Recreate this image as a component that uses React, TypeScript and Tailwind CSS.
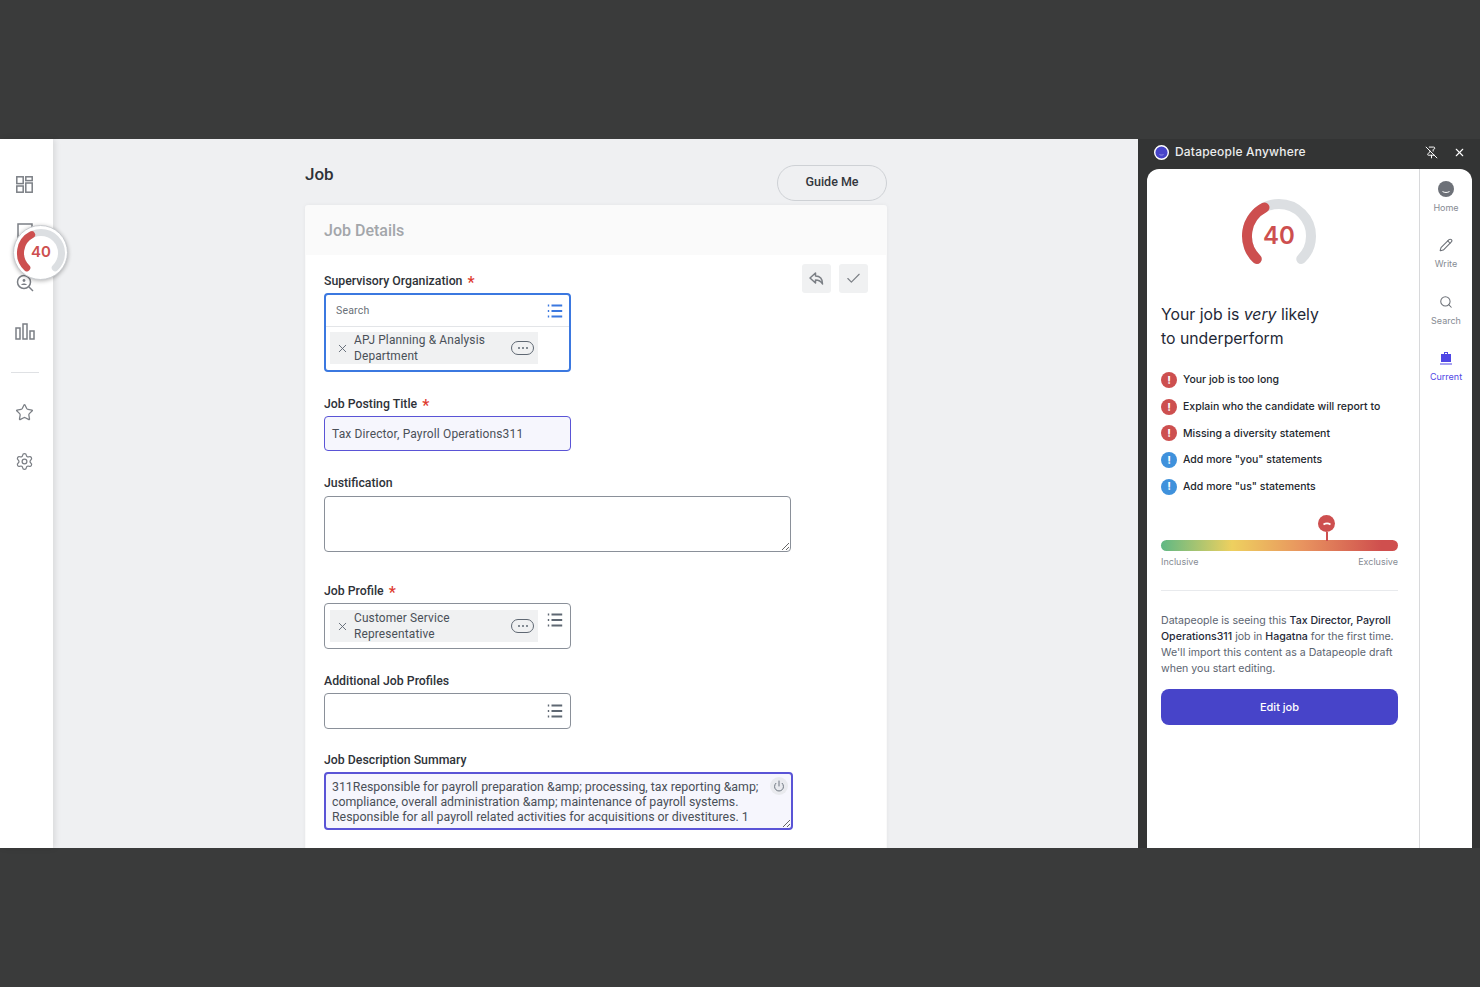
import React from "react";
import { Star, Settings, X, Check, PinOff, Pencil, Search, Power } from "lucide-react";

const roboto = "font-['Roboto',sans-serif]";

function Gauge({ size, r, sw, score, cls }: { size: number; r: number; sw: number; score: string; cls: string }) {
  const c = size / 2;
  const pt = (deg: number) => {
    const a = (deg * Math.PI) / 180;
    return `${c + r * Math.sin(a)} ${c - r * Math.cos(a)}`;
  };
  return (
    <div className="relative" style={{ width: size, height: size }}>
      <svg width={size} height={size} viewBox={`0 0 ${size} ${size}`} fill="none" strokeLinecap="round" strokeWidth={sw}>
        <path d={`M${pt(-136)} A${r} ${r} 0 1 1 ${pt(136)}`} stroke="#dcdfe2" />
        <path d={`M${pt(-136)} A${r} ${r} 0 0 1 ${pt(-27)}`} stroke="#cd4f4f" />
      </svg>
      <span className={`absolute inset-0 flex items-center justify-center font-['Inter',sans-serif] font-semibold text-[#cd4f4f] ${cls}`}>{score}</span>
    </div>
  );
}

function ListIcon({ blue }: { blue?: boolean }) {
  const col = blue ? "#3b78e0" : "#5f6873";
  return (
    <svg width="16" height="14" viewBox="0 0 16 14" fill="none" stroke={col} strokeWidth="1.8">
      <path d="M4.500 1.500H15.200M4.500 7H15.200M4.500 12.500H15.200" />
      <path d="M0.800 1.500H2.200M0.800 7H2.200M0.800 12.500H2.200" />
    </svg>
  );
}

function Chip({ l1, l2 }: { l1: string; l2: string }) {
  return (
    <div className="flex h-8 w-[208px] items-center bg-[#f0f1f2]">
      <X size={13} className="ml-[6px] shrink-0 text-[#5f6873]" strokeWidth={1.7} />
      <div className="ml-[5px] flex-1 text-[11.900px] leading-4 tracking-[0.15px] text-[#4a5058]">
        <div>{l1}</div>
        <div>{l2}</div>
      </div>
      <div className="mr-[4px] flex h-[14px] w-[23px] items-center justify-center gap-[2px] rounded-full border border-[#5f6873]">
        <i className="h-[2px] w-[2px] rounded-full bg-[#5f6873]" />
        <i className="h-[2px] w-[2px] rounded-full bg-[#5f6873]" />
        <i className="h-[2px] w-[2px] rounded-full bg-[#5f6873]" />
      </div>
    </div>
  );
}

function Label({ text, req }: { text: string; req?: boolean }) {
  return (
    <div className="flex h-4 text-[12.300px] font-medium leading-4 text-[#2e3238]">
      <span>{text}</span>
      {req && <span className="ml-[5px] mt-[2px] text-[16px] leading-4 text-[#de3b2f]">*</span>}
    </div>
  );
}

function Issue({ text, blue }: { text: string; blue?: boolean }) {
  return (
    <div className="flex h-[26.600px] items-center">
      <span className={`flex h-4 w-4 items-center justify-center rounded-full text-[11px] font-bold text-white ${blue ? "bg-[#3f91dc]" : "bg-[#cd4f4f]"}`}>!</span>
      <span className="ml-[6px] text-[10.500px] font-medium text-[#23272e]">{text}</span>
    </div>
  );
}

function NavItem({ icon, label, active }: { icon: React.ReactNode; label: string; active?: boolean }) {
  return (
    <div className={`flex h-[56.300px] flex-col items-center ${active ? "text-[#4f46e5]" : "text-[#868b93]"}`}>
      <div className="flex h-[20px] w-full items-center justify-center text-[#6d7178]">{icon}</div>
      <div className="mt-[3px] text-[9px] leading-3">{label}</div>
    </div>
  );
}

export default function App() {
  return (
    <div className="flex h-[987px] w-[1480px] flex-col overflow-hidden bg-[#3a3b3b]">
      <div className="h-[139px]" />
      <div className="relative flex h-[709px]">
        {/* Left rail */}
        <aside className="z-10 flex w-[53px] shrink-0 flex-col items-center bg-white pr-[4px] pt-[35px] text-[#7b7f85] shadow-[2px_0_6px_rgba(0,0,0,0.1)]">
          <svg className="my-[1.500px]" width="17" height="17" viewBox="0 0 17 17" fill="none" stroke="#7b7f85" strokeWidth="1.500">
            <rect x="0.800" y="0.800" width="6.400" height="6.800" />
            <rect x="0.800" y="10" width="6.400" height="6.200" />
            <rect x="9.800" y="0.800" width="6.400" height="3.800" />
            <rect x="9.800" y="7" width="6.400" height="9.200" />
          </svg>
          <svg className="mt-[29px]" width="16" height="18" viewBox="0 0 16 18" fill="none" stroke="#7b7f85" strokeWidth="1.500">
            <rect x="1" y="1" width="14" height="16" />
          </svg>
          <svg className="mt-[32px]" width="20" height="20" viewBox="0 0 20 20" fill="none" stroke="#7b7f85" strokeWidth="1.500">
            <circle cx="9" cy="9" r="6.500" />
            <path d="M14 14L18 18" />
            <circle cx="9" cy="7.500" r="1.400" fill="#7b7f85" stroke="none" />
            <path d="M6.200 12c.3-2 5.300-2 5.600 0z" fill="#7b7f85" stroke="none" />
          </svg>
          <svg className="mt-[30px]" width="20" height="18" viewBox="0 0 20 18" fill="none" stroke="#7b7f85" strokeWidth="1.500">
            <rect x="1" y="5" width="4" height="11" />
            <rect x="8" y="1" width="4" height="15" />
            <rect x="15" y="8" width="4" height="8" />
          </svg>
          <div className="mt-[31px] h-px w-[28px] bg-[#dfe1e4]" />
          <Star size={19} strokeWidth={1.6} className="mt-[30px]" />
          <Settings size={19} strokeWidth={1.6} className="mt-[30px]" />
        </aside>

        {/* Floating score */}
        <div className="absolute left-[13px] top-[86px] z-20 flex h-[55px] w-[55px] items-center justify-center rounded-full border border-[#c9ccd0] bg-white shadow-[0_1px_4px_rgba(0,0,0,0.3)]">
          <Gauge size={52} r={20.500} sw={7} score="40" cls="pl-[1px] text-[15px]" />
        </div>

        {/* Main */}
        <main className={`w-[1085px] shrink-0 overflow-hidden bg-[#eff0f2] pl-[252px] ${roboto}`}>
          <div className="w-[582px]">
            <div className="flex h-[66px] justify-between">
              <h1 className="pt-[24px] text-[17px] font-medium leading-[22px] text-[#2e3238]">Job</h1>
              <button className="mt-[26px] h-[36px] w-[110px] rounded-full border border-[#ced1d5] pb-[2px] text-[12.500px] font-medium text-[#33373d]">Guide Me</button>
            </div>
            <section className="rounded-t-[3px] bg-[#fafafa] px-[1px] shadow-[0_0_4px_rgba(0,0,0,0.05)]">
              <div className="flex h-[50px] items-center pl-[18px] pt-[2px] text-[16px] font-medium text-[#a3a6aa]">Job Details</div>
              <div className="h-[640px] bg-white px-[18px]">
                <div className="flex justify-between pt-[9px]">
                  <div className="pt-[9px]">
                    <Label text="Supervisory Organization" req />
                    <div className="mt-1 h-[79px] w-[247px] rounded-[4px] border-2 border-[#3b78e0]">
                      <div className="flex h-[32px] items-center justify-between border-b border-[#e3e5e8] pl-[10px] pr-[6px]">
                        <span className="text-[10.500px] tracking-[0.2px] text-[#6a7078]">Search</span>
                        <ListIcon blue />
                      </div>
                      <div className="pl-[4px] pt-[5px]">
                        <Chip l1="APJ Planning & Analysis" l2="Department" />
                      </div>
                    </div>
                  </div>
                  <div className="flex gap-2">
                    <div className="flex h-[29px] w-[29px] items-center justify-center rounded-[3px] bg-[#f0f1f2]">
                      <svg width="17" height="17" viewBox="0 0 17 17" fill="none" stroke="#7b7f85" strokeWidth="1.500" strokeLinejoin="round">
                        <path d="M7.500 3L2 8l5.500 5v-3c3.500 0 5.500 1.200 7 4 0-5-2.500-8-7-8V3z" />
                      </svg>
                    </div>
                    <div className="flex h-[29px] w-[29px] items-center justify-center rounded-[3px] bg-[#f0f1f2] text-[#7b7f85]">
                      <Check size={17} strokeWidth={1.6} />
                    </div>
                  </div>
                </div>

                <div className="mt-[24px]">
                  <Label text="Job Posting Title" req />
                  <div className="mt-1 flex h-[35px] w-[247px] items-center rounded-[4px] border border-[#5a54d6] bg-[#f6f6fd] pl-[7px] text-[12px] tracking-[0.14px] text-[#4a5058]">Tax Director, Payroll Operations311</div>
                </div>

                <div className="mt-[24px]">
                  <Label text="Justification" />
                  <textarea readOnly className="mt-[5px] block h-[56px] w-[467px] resize overflow-hidden rounded-[4px] border border-[#8a9099] bg-white" />
                </div>

                <div className="mt-[31px]">
                  <Label text="Job Profile" req />
                  <div className="mt-1 flex h-[46px] w-[247px] rounded-[4px] border border-[#8a9099] pl-[5px] pt-[6px]">
                    <Chip l1="Customer Service" l2="Representative" />
                    <div className="ml-[9px] pt-[3px]"><ListIcon /></div>
                  </div>
                </div>

                <div className="mt-[24px]">
                  <Label text="Additional Job Profiles" />
                  <div className="mt-1 flex h-[36px] w-[247px] items-center justify-end rounded-[4px] border border-[#8a9099] pr-[7px]">
                    <ListIcon />
                  </div>
                </div>

                <div className="mt-[23px]">
                  <Label text="Job Description Summary" />
                  <div className="relative mt-1 w-[469px]">
                    <textarea
                      readOnly
                      value={"311Responsible for payroll preparation &amp; processing, tax reporting &amp;\ncompliance, overall administration &amp; maintenance of payroll systems.\nResponsible for all payroll related activities for acquisitions or divestitures. 1"}
                      className="block h-[58px] w-[469px] resize overflow-hidden whitespace-pre rounded-[4px] border-2 border-[#5a54d6] bg-[#f6f6fd] pl-[6px] pt-[6px] text-[12.350px] leading-[15px] text-[#4a5058]"
                    />
                    <div className="absolute right-[5px] top-[5px] flex h-[18px] w-[18px] items-center justify-center rounded-full bg-[#e9eaee] text-[#5f6873]">
                      <Power size={12} strokeWidth={1.8} />
                    </div>
                  </div>
                </div>
              </div>
            </section>
          </div>
        </main>

        {/* Right panel */}
        <div className="flex min-w-0 flex-1 flex-col bg-[#333434] font-['Inter',sans-serif]">
          <header className="flex h-[30px] shrink-0 items-center pb-[4px] pl-[16px] pr-[14px] text-white">
            <svg width="15" height="15" viewBox="0 0 15 15" fill="none">
              <circle cx="7.500" cy="7.500" r="6.800" fill="#4744c9" stroke="#ffffff" strokeWidth="1.400" />
              <path d="M5.500 9.500c1 .7 3 .7 4 0" stroke="#a9a7ef" strokeWidth="0.800" />
            </svg>
            <span className="ml-[6px] flex-1 text-[12px] font-medium tracking-[0.2px] text-[#eceded]">Datapeople Anywhere</span>
            <PinOff size={13} strokeWidth={1.8} />
            <X size={13} strokeWidth={2} className="ml-[15px]" />
          </header>
          <div className="ml-[9px] mr-[8px] flex min-h-0 flex-1 overflow-hidden rounded-t-[12px] bg-white">
            <div className="w-[273px] shrink-0 border-r border-[#d8d9db] pl-[14px] pr-[21px]">
              <div className="flex justify-center pr-[1px] pt-[17px]">
                <Gauge size={100} r={32} sw={10} score="40" cls="text-[24px]" />
              </div>
              <h2 className="mt-[17px] text-[15.800px] leading-6 text-[#1f2937]">
                Your job is <em>very</em> likely
                <br />
                to underperform
              </h2>
              <div className="mt-[16px]">
                <Issue text="Your job is too long" />
                <Issue text="Explain who the candidate will report to" />
                <Issue text="Missing a diversity statement" />
                <Issue text={'Add more "you" statements'} blue />
                <Issue text={'Add more "us" statements'} blue />
              </div>
              <div className="relative mt-[40px] h-[11px] rounded-full bg-[linear-gradient(90deg,#5fb884_0%,#eed05f_30%,#e8935f_60%,#cf4f4e_93%)]">
                <div className="absolute left-[157px] top-[-25px] flex flex-col items-center">
                  <div className="flex h-[17px] w-[17px] items-center justify-center rounded-full bg-[#cd4f4f]">
                    <svg width="10" height="5" viewBox="0 0 10 5" fill="none"><path d="M1.500 3.500c2-1.200 5-1.200 7 0" stroke="#ffffff" strokeWidth="1.800" /></svg>
                  </div>
                  <i className="h-[9px] w-[2px] bg-[#cd4f4f]" />
                </div>
              </div>
              <div className="mt-[5px] flex justify-between text-[9px] leading-3 text-[#868b93]">
                <span>Inclusive</span>
                <span>Exclusive</span>
              </div>
              <div className="mt-[22px] h-px bg-[#e8eaed]" />
              <p className="mt-[22px] text-[10.600px] leading-4 text-[#5c6470]">
                Datapeople is seeing this <b className="font-medium text-[#1f2937]">Tax Director, Payroll Operations311</b> job in <b className="font-medium text-[#1f2937]">Hagatna</b> for the first time. We'll import this content as a Datapeople draft when you start editing.
              </p>
              <button className="mt-[12px] h-[36px] w-full rounded-[8px] bg-[#4744c9] text-[11px] font-medium text-white">Edit job</button>
            </div>
            <nav className="flex-1 pt-[10px]">
              <NavItem
                label="Home"
                icon={
                  <svg width="16" height="16" viewBox="0 0 16 16" fill="none">
                    <circle cx="8" cy="8" r="8" fill="#6d7178" />
                    <path d="M4.500 10.500c2 1.300 5 1.300 7 0" stroke="#ffffff" strokeWidth="1" />
                  </svg>
                }
              />
              <NavItem label="Write" icon={<Pencil size={14} strokeWidth={1.8} />} />
              <NavItem label="Search" icon={<Search size={14} strokeWidth={1.8} />} />
              <NavItem
                active
                label="Current"
                icon={
                  <svg width="14" height="14" viewBox="0 0 14 14" fill="#4f46e5">
                    <path d="M5 1h4v2h3v8H2V3h3zM6 2v1h2V2z" fill="#4f46e5" fillRule="evenodd" />
                    <rect x="1" y="12.500" width="12" height="1" />
                  </svg>
                }
              />
            </nav>
          </div>
        </div>
      </div>
      <div className="flex-1" />
    </div>
  );
}
